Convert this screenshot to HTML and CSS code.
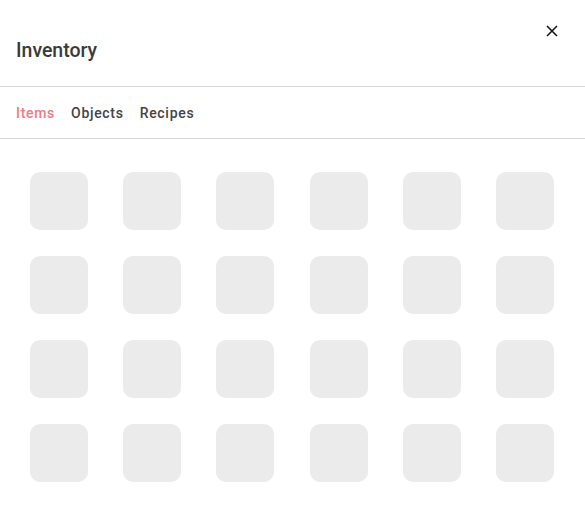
FILE: index.html
```html
<!DOCTYPE html>
<html>
<head>
<meta charset="utf-8">
<link rel="stylesheet" href="styles.css">
</head>
<body>
<div class="dialog">
  <header class="head">
    <h1 class="title">Inventory</h1>
    <button class="close" aria-label="Close">
      <svg width="12" height="12" viewBox="0 0 12 12"><path d="M1 1L11 11M11 1L1 11" stroke="#111" stroke-width="1.5" fill="none"/></svg>
    </button>
  </header>
  <nav class="tabs">
    <span class="tab active">Items</span>
    <span class="tab">Objects</span>
    <span class="tab">Recipes</span>
  </nav>
  <div class="grid">
    <div class="slot"></div><div class="slot"></div><div class="slot"></div><div class="slot"></div><div class="slot"></div><div class="slot"></div>
    <div class="slot"></div><div class="slot"></div><div class="slot"></div><div class="slot"></div><div class="slot"></div><div class="slot"></div>
    <div class="slot"></div><div class="slot"></div><div class="slot"></div><div class="slot"></div><div class="slot"></div><div class="slot"></div>
    <div class="slot"></div><div class="slot"></div><div class="slot"></div><div class="slot"></div><div class="slot"></div><div class="slot"></div>
  </div>
</div>
</body>
</html>
```

FILE: styles.css
```css
html, body {
  margin: 0;
  padding: 0;
  background: #fff;
  font-family: Roboto, "Liberation Sans", sans-serif;
}
.dialog {
  width: 585px;
}
.head {
  position: relative;
  height: 87px;
  border-bottom: 1px solid #d6d6d6;
  display: flex;
  align-items: flex-end;
  box-sizing: border-box;
  padding: 0 16px 26px;
}
.title {
  margin: 0;
  font-size: 19.5px;
  font-weight: 500;
  color: #3a3a3a;
  line-height: 1;
}
.close {
  position: absolute;
  top: 25px;
  right: 27px;
  border: 0;
  background: none;
  padding: 0;
  width: 12px;
  height: 12px;
  display: flex;
}
.tabs {
  height: 52px;
  box-sizing: border-box;
  padding: 1px 16px 0;
  border-bottom: 1px solid #d6d6d6;
  display: flex;
  align-items: center;
  gap: 16px;
}
.tab {
  font-size: 14px;
  font-weight: 500;
  letter-spacing: 0.7px;
  color: #444;
}
.tab.active {
  color: #f07a80;
}
.grid {
  display: grid;
  grid-template-columns: repeat(6, 58px);
  justify-content: space-between;
  row-gap: 26px;
  padding: 33px 31px 0 30px;
}
.slot {
  width: 58px;
  height: 58px;
  border-radius: 10px;
  background: #ebebeb;
}
```
